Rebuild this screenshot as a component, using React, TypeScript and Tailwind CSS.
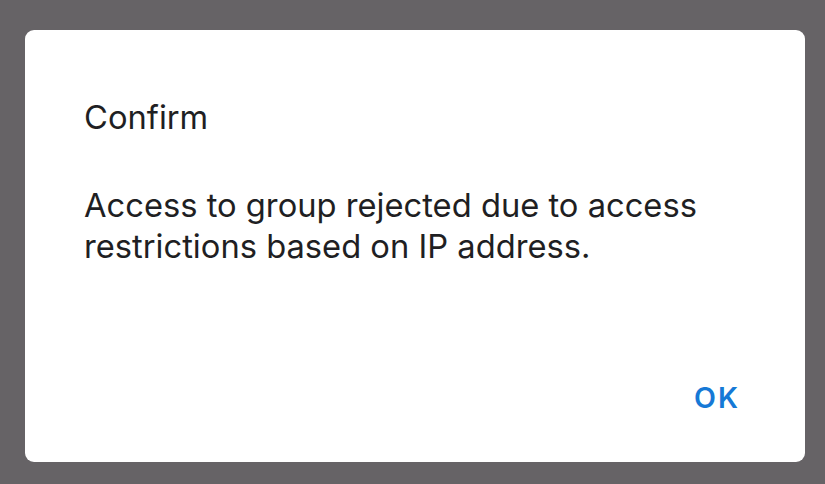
export default function App() {
  return (
    <div className="min-h-screen bg-[#666366] pt-[30px] pl-[25px] pr-[20px] font-['Inter',sans-serif]">
      <div className="flex h-[432px] w-[780px] flex-col rounded-[9px] bg-white pl-[59px] pr-[67px] pt-[67px] pb-[48px]">
        <h2 className="text-[32.7px] leading-[41px] font-normal text-[#1f1f23]">Confirm</h2>
        <p className="mt-[47px] text-[32.7px] leading-[41px] text-[#1f1f23]">
          Access to group rejected due to access restrictions based on IP address.
        </p>
        <div className="mt-auto flex justify-end">
          <button className="-mr-[2px] text-[28.5px] leading-[32px] font-semibold tracking-[2px] text-[#1679d6]">OK</button>
        </div>
      </div>
    </div>
  );
}
